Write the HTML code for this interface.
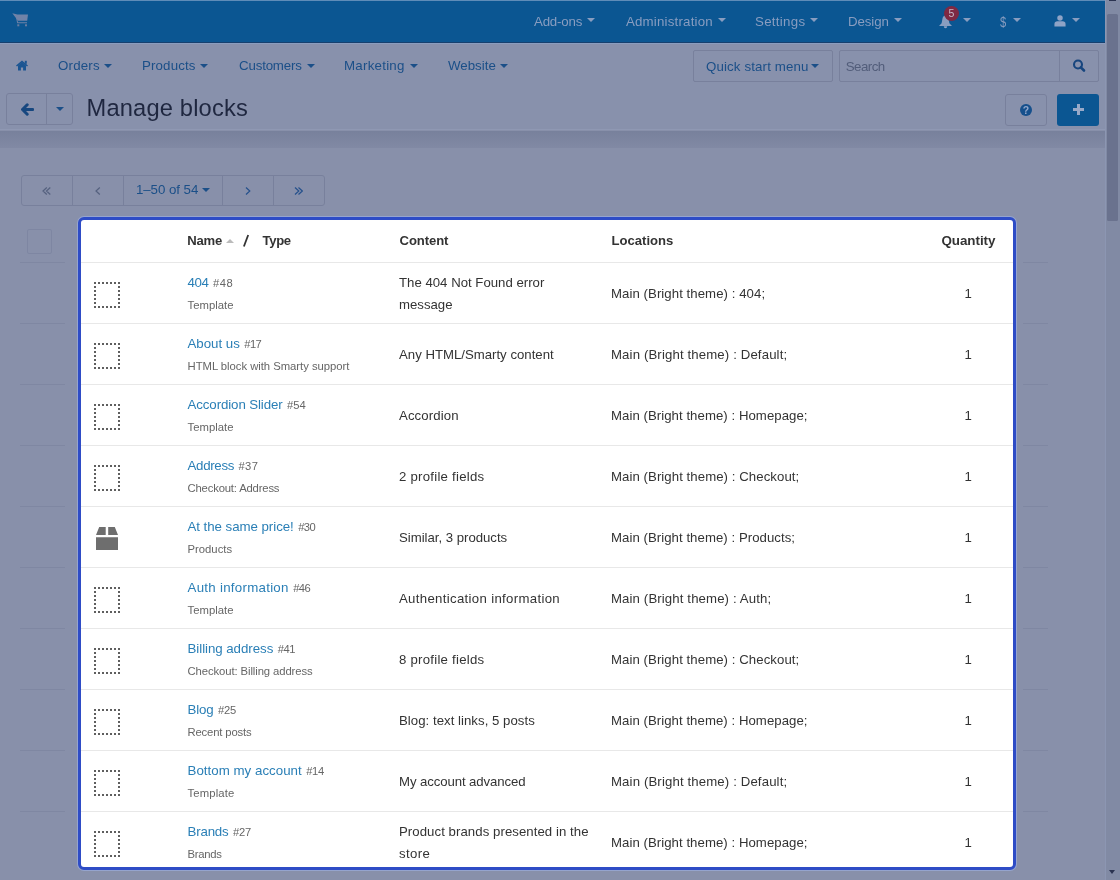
<!DOCTYPE html><html><head><meta charset="utf-8"><style>
*{box-sizing:border-box;margin:0;padding:0}
html,body{width:1120px;height:880px;overflow:hidden}
body{position:relative;will-change:transform;background:#8890aa;font-family:"Liberation Sans",sans-serif;color:#333}
.a{position:absolute;white-space:nowrap}
#topnav{left:0;top:0;width:1105px;height:43px;background:#0b5692;border-top:1px solid #5f8cb8;border-bottom:1px solid #17406e}
.tn{top:14px;font-size:13.3px;line-height:16px;color:#899dc0}
.tcar{width:0;height:0;border-left:4.5px solid transparent;border-right:4.5px solid transparent;border-top:4.5px solid #899dc0}
#subnav{left:0;top:43px;width:1105px;height:87px;background:#8891ac;border-top:1px solid #8a9dbf;border-bottom:1.5px solid #8f98b3}
.sn{top:58px;font-size:13.3px;line-height:16px;color:#1b4f88}
.scar{width:0;height:0;border-left:4px solid transparent;border-right:4px solid transparent;border-top:4px solid #1b4f88}
#shadow{left:0;top:130.5px;width:1105px;height:17.5px;background:linear-gradient(#78819c,#8189a4)}
#scroll{left:1105px;top:0;width:15px;height:880px;background:#818aa4;border-left:1px solid #8c96b2}
.btn{border:1px solid #78809c;border-radius:3px}
.hl{left:78px;top:217px;width:938px;height:653px;border:3px solid #2e4cc6;border-radius:6px;background:#fff;overflow:hidden;box-shadow:0 0 0 1px rgba(160,180,235,0.55)}
.hd{font-weight:bold;font-size:13.1px;color:#333;line-height:16px}
.lk{font-size:13.3px;color:#2a7fb6;line-height:16px}
.id{font-size:11.2px;color:#666;line-height:16px}
.ty{font-size:11.3px;color:#666;line-height:16px}
.ct{font-size:13.2px;color:#333;line-height:22px}
.rl{height:1px;background:#e8e8e8}
.bl{height:1px;background:#7f87a2}
</style></head><body>
<div id="topnav" class="a"></div>
<svg class="a" style="left:12px;top:12px" width="17" height="15" viewBox="0 0 17 15"><path d="M0.3 1.2 L3.3 2 L5 2.6 L16 2.6 L15.2 8.8 L6 8.8 Z" fill="#7083a8"/><path d="M4.2 2.3 L6 10.3 L15 10.3 L15 11.3 L5.2 11.3 L3.4 2.6 Z" fill="#7083a8"/><rect x="5.3" y="12.3" width="2" height="2" fill="#6a7ca0"/><rect x="13" y="12.3" width="2" height="2" fill="#6a7ca0"/></svg>
<div id="m_tnAdd-ons" class="a tn" style="left:534.0px;letter-spacing:-0.200px">Add-ons</div>
<div class="a tcar" style="left:586.5px;top:17.5px"></div>
<div id="m_tnAdministration" class="a tn" style="left:625.9px;letter-spacing:0.200px">Administration</div>
<div class="a tcar" style="left:718px;top:17.5px"></div>
<div id="m_tnSettings" class="a tn" style="left:755.0px;letter-spacing:0.286px">Settings</div>
<div class="a tcar" style="left:810px;top:17.5px"></div>
<div id="m_tnDesign" class="a tn" style="left:847.9px;letter-spacing:-0.080px">Design</div>
<div class="a tcar" style="left:894px;top:17.5px"></div>
<svg class="a" style="left:938px;top:14px" width="15" height="15" viewBox="0 0 15 15"><path d="M7.5 1.5 C5.8 1.5 4.6 3 4.3 5.5 L3.6 9.3 L1 12 L14 12 L11.4 9.3 L10.7 5.5 C10.4 3 9.2 1.5 7.5 1.5 Z" fill="#899dc0"/><path d="M5.8 12.3 L9.2 12.3 C9.2 13.5 8.5 14.2 7.5 14.2 C6.5 14.2 5.8 13.5 5.8 12.3Z" fill="#8fa3c6"/></svg>
<div class="a" style="left:944px;top:5.5px;width:15px;height:15px;border-radius:50%;background:#7e2943"></div>
<div class="a" style="left:944px;top:5.5px;width:15px;height:15px;font-size:10.5px;line-height:15px;text-align:center;color:#c8b8c8">5</div>
<div class="a tcar" style="left:963px;top:17.5px"></div>
<div class="a tn" style="left:1000.3px;font-size:14px;color:#899dc0;transform:scaleX(0.8);transform-origin:0 0">$</div>
<div class="a tcar" style="left:1012.5px;top:17.5px"></div>
<svg class="a" style="left:1054px;top:15px" width="12" height="12" viewBox="0 0 14 14"><circle cx="7" cy="3.6" r="3.2" fill="#8fa3c6"/><path d="M0.5 13.5 L0.5 10.5 C0.5 8.5 2 7.3 3.8 7.3 L10.2 7.3 C12 7.3 13.5 8.5 13.5 10.5 L13.5 13.5 Z" fill="#8fa3c6"/></svg>
<div class="a tcar" style="left:1072px;top:17.5px"></div>
<div id="subnav" class="a"></div>
<svg class="a" style="left:16px;top:59.5px" width="12" height="11" viewBox="0 0 12 11"><path d="M0 5.6 L6 0.6 L12 5.6 L11 6.6 L6 2.5 L1 6.6 Z" fill="#1b5592"/><path d="M2 5.4 L6 2.1 L10 5.4 L10 10.6 L7.1 10.6 L7.1 7.6 L4.9 7.6 L4.9 10.6 L2 10.6 Z" fill="#1b5592"/><rect x="8.8" y="0.8" width="2" height="3" fill="#1b5592"/></svg>
<div id="m_snOrders" class="a sn" style="left:58.0px;letter-spacing:0.200px">Orders</div>
<div class="a scar" style="left:104px;top:64px"></div>
<div id="m_snProducts" class="a sn" style="left:142.0px;letter-spacing:0.143px">Products</div>
<div class="a scar" style="left:200px;top:64px"></div>
<div id="m_snCustomers" class="a sn" style="left:239.1px;letter-spacing:-0.200px">Customers</div>
<div class="a scar" style="left:307px;top:64px"></div>
<div id="m_snMarketing" class="a sn" style="left:344.0px;letter-spacing:0.250px">Marketing</div>
<div class="a scar" style="left:410px;top:64px"></div>
<div id="m_snWebsite" class="a sn" style="left:448.0px">Website</div>
<div class="a scar" style="left:500px;top:64px"></div>
<div class="a btn" style="left:693px;top:50px;width:140px;height:31.5px;border-radius:2px"></div>
<div id="m_qs" class="a sn" style="left:706.0px;top:58.5px;letter-spacing:0.133px">Quick start menu</div>
<div class="a scar" style="left:811px;top:64px"></div>
<div class="a btn" style="left:839px;top:50px;width:260px;height:31.5px;border-radius:2px"></div>
<div class="a" style="left:1059px;top:51px;width:1px;height:30px;background:#78809c"></div>
<div id="m_se" class="a sn" style="left:845.8px;top:58.5px;color:#525d7a;letter-spacing:-0.560px">Search</div>
<svg class="a" style="left:1072px;top:59px" width="14" height="14" viewBox="0 0 14 14"><circle cx="6" cy="5.5" r="4" fill="none" stroke="#17457e" stroke-width="2.1"/><path d="M8.8 8.3 L12 11.5" stroke="#17457e" stroke-width="2.6" stroke-linecap="round"/></svg>
<div class="a btn" style="left:6px;top:93px;width:67px;height:32px"></div>
<div class="a" style="left:46px;top:94px;width:1px;height:30px;background:#78809c"></div>
<svg class="a" style="left:21px;top:103px" width="13" height="13" viewBox="0 0 13 13"><path d="M1.5 6.5 L6.2 1.8 M1.5 6.5 L6.2 11.2 M1.8 6.5 L11.8 6.5" stroke="#17477f" stroke-width="3" stroke-linecap="round" fill="none"/></svg>
<div class="a scar" style="left:56px;top:106.5px"></div>
<div id="m_ti" class="a" style="left:86.5px;top:92.5px;font-size:23.7px;line-height:30px;color:#1f2740;letter-spacing:0.167px">Manage blocks</div>
<div class="a btn" style="left:1005px;top:94px;width:42px;height:32px"></div>
<div class="a" style="left:1020.1px;top:104px;width:11.8px;height:11.8px;border-radius:50%;background:#16508c"></div>
<div class="a" style="left:1020.1px;top:104px;width:11.8px;height:11.8px;font-size:10.5px;line-height:12px;font-weight:bold;text-align:center;color:#92a6ca">?</div>
<div class="a" style="left:1057px;top:94px;width:42px;height:32px;background:#0b5692;border-radius:3px"></div>
<div class="a" style="left:1073px;top:108px;width:11px;height:3px;background:#98a9c8"></div>
<div class="a" style="left:1077px;top:104px;width:3px;height:11px;background:#98a9c8"></div>
<div id="shadow" class="a"></div>
<div class="a btn" style="left:20.5px;top:174.5px;width:304px;height:31px"></div>
<div class="a" style="left:71.5px;top:175px;width:1px;height:30px;background:#78809c"></div>
<div class="a" style="left:122.5px;top:175px;width:1px;height:30px;background:#78809c"></div>
<div class="a" style="left:222px;top:175px;width:1px;height:30px;background:#78809c"></div>
<div class="a" style="left:273px;top:175px;width:1px;height:30px;background:#78809c"></div>
<svg class="a" style="left:42px;top:186.5px" width="9" height="8" viewBox="0 0 9 8"><path d="M4.8 0.5 L1 4 L4.8 7.5 M8.3 0.5 L4.5 4 L8.3 7.5" fill="none" stroke="#55617f" stroke-width="1.2"/></svg>
<svg class="a" style="left:94.5px;top:186.5px" width="6" height="8" viewBox="0 0 6 8"><path d="M4.8 0.5 L1 4 L4.8 7.5" fill="none" stroke="#55617f" stroke-width="1.2"/></svg>
<svg class="a" style="left:244.5px;top:187px" width="6" height="8" viewBox="0 0 6 8"><path d="M1 0.5 L4.8 4 L1 7.5" fill="none" stroke="#26518c" stroke-width="1.2"/></svg>
<svg class="a" style="left:294px;top:187px" width="9" height="8" viewBox="0 0 9 8"><path d="M1 0.5 L4.8 4 L1 7.5 M4.5 0.5 L8.3 4 L4.5 7.5" fill="none" stroke="#26518c" stroke-width="1.2"/></svg>
<div id="m_pg" class="a sn" style="left:135.9px;top:182px;letter-spacing:-0.044px">1–50 of 54</div>
<div class="a scar" style="left:202px;top:188px"></div>
<div class="a" style="left:27px;top:229px;width:25px;height:25px;border-radius:2px;border:1px solid #7e86a2"></div>
<div class="a bl" style="left:20px;top:262px;width:45px"></div>
<div class="a bl" style="left:1023px;top:262px;width:25px"></div>
<div class="a bl" style="left:20px;top:323px;width:45px"></div>
<div class="a bl" style="left:1023px;top:323px;width:25px"></div>
<div class="a bl" style="left:20px;top:384px;width:45px"></div>
<div class="a bl" style="left:1023px;top:384px;width:25px"></div>
<div class="a bl" style="left:20px;top:445px;width:45px"></div>
<div class="a bl" style="left:1023px;top:445px;width:25px"></div>
<div class="a bl" style="left:20px;top:506px;width:45px"></div>
<div class="a bl" style="left:1023px;top:506px;width:25px"></div>
<div class="a bl" style="left:20px;top:567px;width:45px"></div>
<div class="a bl" style="left:1023px;top:567px;width:25px"></div>
<div class="a bl" style="left:20px;top:628px;width:45px"></div>
<div class="a bl" style="left:1023px;top:628px;width:25px"></div>
<div class="a bl" style="left:20px;top:689px;width:45px"></div>
<div class="a bl" style="left:1023px;top:689px;width:25px"></div>
<div class="a bl" style="left:20px;top:750px;width:45px"></div>
<div class="a bl" style="left:1023px;top:750px;width:25px"></div>
<div class="a bl" style="left:20px;top:811px;width:45px"></div>
<div class="a bl" style="left:1023px;top:811px;width:25px"></div>
<div class="a hl">
<div id="m_hdName" class="a hd" style="left:106.30000000000001px;top:13px;letter-spacing:-0.267px">Name</div>
<div class="a" style="left:145px;top:19px;width:0;height:0;border-left:4px solid transparent;border-right:4px solid transparent;border-bottom:4px solid #bbb"></div>
<svg class="a" style="left:161px;top:14px" width="8" height="14" viewBox="0 0 8 14"><path d="M6.2 1 L1.9 12.5" stroke="#333" stroke-width="1.8"/></svg>
<div id="m_hdType" class="a hd" style="left:181.5px;top:13px;letter-spacing:-0.333px">Type</div>
<div id="m_hdContent" class="a hd" style="left:318.6px;top:13px;letter-spacing:-0.100px">Content</div>
<div id="m_hdLocations" class="a hd" style="left:530.5px;top:13px">Locations</div>
<div id="m_hdQuantity" class="a hd" style="left:860.4px;top:13px;font-size:13.4px;letter-spacing:-0.029px">Quantity</div>
<div class="a rl" style="left:0px;top:42px;width:932px"></div>
<div class="a" style="left:106.5px;top:53.30000000000001px"><span id="m_lk0" class="lk" style=";letter-spacing:-0.400px">404</span> <span id="m_id0" class="id" style=";letter-spacing:0.600px">#48</span></div>
<div id="m_ty0" class="a ty" style="left:106.5px;top:77px;letter-spacing:0.029px">Template</div>
<div class="a ct" style="left:318px;top:52px"><span id="m_ct0" style=";letter-spacing:0.009px">The 404 Not Found error</span><br><span id="m_cb0" style="">message</span></div>
<div id="m_lo0" class="a ct" style="left:530px;top:62.69999999999999px;letter-spacing:0.064px">Main (Bright theme) : 404;</div>
<div class="a ct" style="left:883.5px;top:62.69999999999999px">1</div>
<div class="a" style="left:13px;top:61.5px;width:26px;height:26px;border:2px dotted #5e5e5e"></div>
<div class="a rl" style="left:0px;top:103px;width:932px"></div>
<div class="a" style="left:106.5px;top:114.30000000000001px"><span id="m_lk1" class="lk" style=";letter-spacing:-0.014px">About us</span> <span id="m_id1" class="id" style=";letter-spacing:-0.650px">#17</span></div>
<div id="m_ty1" class="a ty" style="left:106.5px;top:138px;letter-spacing:-0.031px">HTML block with Smarty support</div>
<div id="m_ct1" class="a ct" style="left:318px;top:123.5px">Any HTML/Smarty content</div>
<div id="m_lo1" class="a ct" style="left:530px;top:123.69999999999999px;letter-spacing:0.134px">Main (Bright theme) : Default;</div>
<div class="a ct" style="left:883.5px;top:123.69999999999999px">1</div>
<div class="a" style="left:13px;top:122.5px;width:26px;height:26px;border:2px dotted #5e5e5e"></div>
<div class="a rl" style="left:0px;top:164px;width:932px"></div>
<div class="a" style="left:106.5px;top:175.3px"><span id="m_lk2" class="lk" style=";letter-spacing:-0.107px">Accordion Slider</span> <span id="m_id2" class="id" style=";letter-spacing:-0.050px">#54</span></div>
<div id="m_ty2" class="a ty" style="left:106.5px;top:199px;letter-spacing:0.029px">Template</div>
<div id="m_ct2" class="a ct" style="left:318px;top:184.5px;letter-spacing:0.112px">Accordion</div>
<div id="m_lo2" class="a ct" style="left:530px;top:184.7px;letter-spacing:0.050px">Main (Bright theme) : Homepage;</div>
<div class="a ct" style="left:883.5px;top:184.7px">1</div>
<div class="a" style="left:13px;top:183.5px;width:26px;height:26px;border:2px dotted #5e5e5e"></div>
<div class="a rl" style="left:0px;top:225px;width:932px"></div>
<div class="a" style="left:106.5px;top:236.3px"><span id="m_lk3" class="lk" style=";letter-spacing:-0.317px">Address</span> <span id="m_id3" class="id" style=";letter-spacing:0.350px">#37</span></div>
<div id="m_ty3" class="a ty" style="left:106.5px;top:260px;letter-spacing:-0.175px">Checkout: Address</div>
<div id="m_ct3" class="a ct" style="left:318px;top:245.5px;letter-spacing:0.247px">2 profile fields</div>
<div id="m_lo3" class="a ct" style="left:530px;top:245.7px;letter-spacing:0.067px">Main (Bright theme) : Checkout;</div>
<div class="a ct" style="left:883.5px;top:245.7px">1</div>
<div class="a" style="left:13px;top:244.5px;width:26px;height:26px;border:2px dotted #5e5e5e"></div>
<div class="a rl" style="left:0px;top:286px;width:932px"></div>
<div class="a" style="left:106.5px;top:297.29999999999995px"><span id="m_lk4" class="lk" style=";letter-spacing:-0.053px">At the same price!</span> <span id="m_id4" class="id" style=";letter-spacing:-0.600px">#30</span></div>
<div id="m_ty4" class="a ty" style="left:106.5px;top:321px">Products</div>
<div id="m_ct4" class="a ct" style="left:318px;top:306.5px;letter-spacing:-0.017px">Similar, 3 products</div>
<div id="m_lo4" class="a ct" style="left:530px;top:306.70000000000005px;letter-spacing:0.050px">Main (Bright theme) : Products;</div>
<div class="a ct" style="left:883.5px;top:306.70000000000005px">1</div>
<svg class="a" style="left:15px;top:307px" width="23" height="24" viewBox="0 0 23 24"><path d="M3.2 0 L9.7 0 L9.7 8 L0 8 Z M12.2 0 L18.8 0 L22 8 L12.2 8 Z M0 10.3 L22 10.3 L22 23 L0 23 Z" fill="#6e6e6e"/></svg>
<div class="a rl" style="left:0px;top:347px;width:932px"></div>
<div class="a" style="left:106.5px;top:358.29999999999995px"><span id="m_lk5" class="lk" style=";letter-spacing:0.273px">Auth information</span> <span id="m_id5" class="id" style=";letter-spacing:-0.600px">#46</span></div>
<div id="m_ty5" class="a ty" style="left:106.5px;top:382px;letter-spacing:0.029px">Template</div>
<div id="m_ct5" class="a ct" style="left:318px;top:367.5px;letter-spacing:0.328px">Authentication information</div>
<div id="m_lo5" class="a ct" style="left:530px;top:367.70000000000005px;letter-spacing:0.123px">Main (Bright theme) : Auth;</div>
<div class="a ct" style="left:883.5px;top:367.70000000000005px">1</div>
<div class="a" style="left:13px;top:366.5px;width:26px;height:26px;border:2px dotted #5e5e5e"></div>
<div class="a rl" style="left:0px;top:408px;width:932px"></div>
<div class="a" style="left:106.5px;top:419.29999999999995px"><span id="m_lk6" class="lk" style=";letter-spacing:-0.050px">Billing address</span> <span id="m_id6" class="id" style=";letter-spacing:-0.500px">#41</span></div>
<div id="m_ty6" class="a ty" style="left:106.5px;top:443px;letter-spacing:-0.096px">Checkout: Billing address</div>
<div id="m_ct6" class="a ct" style="left:318px;top:428.5px;letter-spacing:0.247px">8 profile fields</div>
<div id="m_lo6" class="a ct" style="left:530px;top:428.70000000000005px;letter-spacing:0.067px">Main (Bright theme) : Checkout;</div>
<div class="a ct" style="left:883.5px;top:428.70000000000005px">1</div>
<div class="a" style="left:13px;top:427.5px;width:26px;height:26px;border:2px dotted #5e5e5e"></div>
<div class="a rl" style="left:0px;top:469px;width:932px"></div>
<div class="a" style="left:106.5px;top:480.29999999999995px"><span id="m_lk7" class="lk" style=";letter-spacing:-0.167px">Blog</span> <span id="m_id7" class="id" style=";letter-spacing:-0.200px">#25</span></div>
<div id="m_ty7" class="a ty" style="left:106.5px;top:504px;letter-spacing:-0.164px">Recent posts</div>
<div id="m_ct7" class="a ct" style="left:318px;top:489.5px;letter-spacing:0.038px">Blog: text links, 5 posts</div>
<div id="m_lo7" class="a ct" style="left:530px;top:489.70000000000005px;letter-spacing:0.050px">Main (Bright theme) : Homepage;</div>
<div class="a ct" style="left:883.5px;top:489.70000000000005px">1</div>
<div class="a" style="left:13px;top:488.5px;width:26px;height:26px;border:2px dotted #5e5e5e"></div>
<div class="a rl" style="left:0px;top:530px;width:932px"></div>
<div class="a" style="left:106.5px;top:541.3px"><span id="m_lk8" class="lk" style=";letter-spacing:0.025px">Bottom my account</span> <span id="m_id8" class="id" style=";letter-spacing:-0.350px">#14</span></div>
<div id="m_ty8" class="a ty" style="left:106.5px;top:565px;letter-spacing:0.143px">Template</div>
<div id="m_ct8" class="a ct" style="left:318px;top:550.5px;letter-spacing:-0.094px">My account advanced</div>
<div id="m_lo8" class="a ct" style="left:530px;top:550.7px;letter-spacing:0.134px">Main (Bright theme) : Default;</div>
<div class="a ct" style="left:883.5px;top:550.7px">1</div>
<div class="a" style="left:13px;top:549.5px;width:26px;height:26px;border:2px dotted #5e5e5e"></div>
<div class="a rl" style="left:0px;top:591px;width:932px"></div>
<div class="a" style="left:106.5px;top:602.3px"><span id="m_lk9" class="lk" style=";letter-spacing:-0.180px">Brands</span> <span id="m_id9" class="id" style=";letter-spacing:-0.250px">#27</span></div>
<div id="m_ty9" class="a ty" style="left:106.5px;top:626px;letter-spacing:-0.280px">Brands</div>
<div class="a ct" style="left:318px;top:601px"><span id="m_ct9" style=";letter-spacing:0.063px">Product brands presented in the</span><br><span id="m_cb9" style=";letter-spacing:0.350px">store</span></div>
<div id="m_lo9" class="a ct" style="left:530px;top:611.7px;letter-spacing:0.050px">Main (Bright theme) : Homepage;</div>
<div class="a ct" style="left:883.5px;top:611.7px">1</div>
<div class="a" style="left:13px;top:610.5px;width:26px;height:26px;border:2px dotted #5e5e5e"></div>
</div>
<div id="scroll" class="a"></div>
<div class="a" style="left:1107px;top:13.5px;width:11px;height:207.5px;background:#6a728e;border-radius:1.5px"></div>
<div class="a" style="left:1109px;top:0;width:7px;height:1px;background:#2a3250"></div>
<div class="a" style="left:1109px;top:870px;width:0;height:0;border-left:3.5px solid transparent;border-right:3.5px solid transparent;border-top:4px solid #2a3250"></div>
</body></html>
